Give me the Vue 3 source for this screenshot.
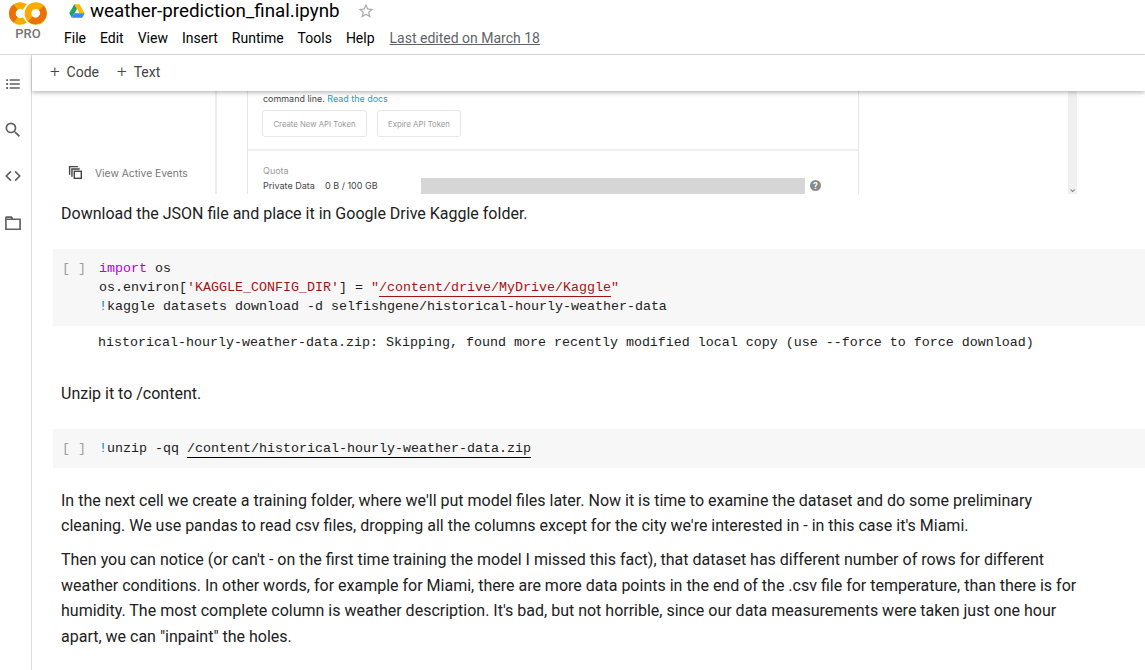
<script setup>
const menus = ['File', 'Edit', 'View', 'Insert', 'Runtime', 'Tools', 'Help']
</script>

<template>
  <div class="page">
    <header class="header">
      <div class="logo">
        <svg width="38" height="23" viewBox="0 0 40 24">
          <path d="M16.600 5.200 A8.300 8.300 0 1 0 16.600 18.800" fill="none" stroke="#f9ab00" stroke-width="7"/>
          <path d="M7 5.200 A8.300 8.300 0 0 0 7 18.800" fill="none" stroke="#e8710a" stroke-width="7"/>
          <circle cx="28.300" cy="12" r="8.300" fill="none" stroke="#f9ab00" stroke-width="7"/>
          <path d="M34.200 6.200 A8.300 8.300 0 0 1 22.400 17.800" fill="none" stroke="#e8710a" stroke-width="7"/>
        </svg>
        <span class="pro">PRO</span>
      </div>
      <div class="title-block">
        <div class="title-row">
          <svg class="drive" width="16" height="14" viewBox="0 0 16 14">
            <path d="M5.3 0.3h5.2l5.2 8.9h-5.100z" fill="#fbbc04"/>
            <path d="M5.3 0.3 0.2 9.2 2.8 13.700 8 4.900z" fill="#1fa463"/>
            <path d="M2.8 13.700h10.400l2.600-4.500H5.400z" fill="#4285f4"/>
          </svg>
          <span class="title">weather-prediction_final.ipynb</span>
          <svg class="star" width="18" height="18" viewBox="0 0 24 24">
            <path d="M22 9.24l-7.19-.62L12 2 9.19 8.63 2 9.24l5.46 4.73L5.82 21 12 17.27 18.18 21l-1.63-7.03L22 9.24zM12 15.4l-3.76 2.27 1-4.28-3.32-2.88 4.38-.38L12 6.1l1.71 4.04 4.38.38-3.32 2.88 1 4.28L12 15.4z" fill="#a9a9a9"/>
          </svg>
        </div>
        <nav class="menu">
          <span v-for="m in menus" :key="m">{{ m }}</span>
          <span class="edited">Last edited on March 18</span>
        </nav>
      </div>
    </header>

    <div class="body">
      <aside class="rail">
        <svg class="rail-icon" width="18" height="18" viewBox="0 0 24 24" fill="#616161"><path d="M3 5.500h2.400v2.400H3zM7.600 5.600H21v2.200H7.600zM3 10.800h2.400v2.400H3zM7.600 10.900H21v2.200H7.600zM3 16.100h2.400v2.400H3zM7.600 16.200H21v2.200H7.600z"/></svg>
        <svg class="rail-icon" width="20" height="20" viewBox="0 0 24 24" fill="#616161"><path d="M15.5 14h-.79l-.28-.27A6.47 6.47 0 0 0 16 9.5 6.5 6.5 0 1 0 9.5 16c1.610 0 3.090-.59 4.230-1.570l.27.28v.79l5 4.990L20.490 19l-4.990-5zm-6 0C7.010 14 5 11.990 5 9.500S7.010 5 9.500 5 14 7.010 14 9.500 11.990 14 9.500 14z"/></svg>
        <svg class="rail-icon" width="20" height="20" viewBox="0 0 24 24" fill="none" stroke="#616161" stroke-width="2"><path d="M9.500 6.500 4 12l5.500 5.500M14.500 6.500 20 12l-5.500 5.500"/></svg>
        <svg class="rail-icon" width="20" height="20" viewBox="0 0 24 24" fill="none" stroke="#616161" stroke-width="2"><path d="M3.500 4.500v15h17V7.500H3.500M3.500 5h6.500l1.500 2"/></svg>
      </aside>

      <main class="main">
        <div class="toolbar">
          <span class="tool"><i>+</i>Code</span>
          <span class="tool"><i>+</i>Text</span>
        </div>

        <div class="shot">
          <div class="shot-inner">
            <div class="shot-nav">
              <div class="events">
                <svg width="15" height="15" viewBox="0 0 16 16" fill="none" stroke="#444" stroke-width="1.500"><path d="M1.700 10.500V1.700h8.800M4.200 12.500V4.200h8.300"/><rect x="6.700" y="6.700" width="7.500" height="7.500"/></svg>
                <span>View Active Events</span>
              </div>
            </div>
            <div class="card">
              <div class="card-top">
                <p class="docs">command line. <a>Read the docs</a></p>
                <div class="buttons">
                  <span class="btn btn-a">Create New API Token</span>
                  <span class="btn btn-b">Expire API Token</span>
                </div>
              </div>
              <div class="quota">
                <div class="quota-title">Quota</div>
                <div class="quota-row">
                  <span class="q-label">Private Data</span>
                  <span class="q-value">0 B / 100 GB</span>
                  <span class="q-bar"></span>
                  <svg width="11" height="11" viewBox="0 0 11 11"><circle cx="5.500" cy="5.500" r="5.500" fill="#8a8a8a"/><text x="5.500" y="8.800" text-anchor="middle" font-size="9" font-weight="700" font-family="Roboto" fill="#fff">?</text></svg>
                </div>
              </div>
            </div>
            <div class="scroll"><span class="chev">⌄</span></div>
          </div>
        </div>

        <p class="text first">Download the JSON file and place it in Google Drive Kaggle folder.</p>

        <div class="cell cell-1">
          <span class="run">[ ]</span>
          <div class="code">
            <div class="line"><span class="kw">import</span><span> os</span></div>
            <div class="line"><span>os.environ[</span><span class="str">'KAGGLE_CONFIG_DIR'</span><span>] = </span><span class="str">"</span><span class="str link-red">/content/drive/MyDrive/Kaggle</span><span class="str">"</span></div>
            <div class="line"><span class="bang">!</span><span>kaggle datasets download -d selfishgene/historical-hourly-weather-data</span></div>
          </div>
        </div>
        <div class="output line">historical-hourly-weather-data.zip: Skipping, found more recently modified local copy (use --force to force download)</div>

        <p class="text unzip">Unzip it to /content.</p>

        <div class="cell cell-2">
          <span class="run">[ ]</span>
          <div class="code">
            <div class="line"><span class="bang">!</span><span>unzip -qq </span><span class="link-black">/content/historical-hourly-weather-data.zip</span></div>
          </div>
        </div>

        <p class="text para">In the next cell we create a training folder, where we'll put model files later. Now it is time to examine the dataset and do some preliminary cleaning. We use pandas to read csv files, dropping all the columns except for the city we're interested in - in this case it's Miami.</p>
        <p class="text para second">Then you can notice (or can't - on the first time training the model I missed this fact), that dataset has different number of rows for different weather conditions. In other words, for example for Miami, there are more data points in the end of the .csv file for temperature, than there is for humidity. The most complete column is weather description. It's bad, but not horrible, since our data measurements were taken just one hour apart, we can "inpaint" the holes.</p>
      </main>
    </div>
  </div>
</template>

<style>
html, body { margin: 0; background: #fff; overflow: hidden; }
</style>

<style scoped>
.page { width: 1145px; height: 670px; overflow: hidden; font-family: Roboto, sans-serif; color: #212121; display: flex; flex-direction: column; }
.header { height: 54px; flex: none; display: flex; border-bottom: 1px solid #dadce0; }
.logo { width: 64px; flex: none; display: flex; flex-direction: column; align-items: center; padding: 2px 8px 0 0; box-sizing: border-box; }
.pro { font-size: 13px; font-weight: 500; color: #757575; line-height: 14px; margin-top: 2px; }
.title-block { display: flex; flex-direction: column; }
.title-row { display: flex; align-items: center; height: 22px; padding-left: 5px; }
.drive { margin-right: 5px; }
.title { font-size: 18.800px; color: #000; line-height: 22px; }
.star { margin-left: 17px; }
.menu { display: flex; gap: 14px; font-size: 14px; line-height: 20px; margin-top: 6px; color: #000; }
.edited { color: #5f6368; text-decoration: underline; margin-left: 1px; }
.body { flex: 1; display: flex; min-height: 0; }
.rail { width: 25px; flex: none; border-right: 1px solid #dadce0; display: flex; flex-direction: column; align-items: center; gap: 26.600px; padding: 20px 6px 0 0; box-sizing: content-box; }
.rail-icon { display: block; }
.main { flex: 1; min-width: 0; display: flex; flex-direction: column; }
.toolbar { height: 36px; box-sizing: border-box; padding: 0 0 4px 18px; flex: none; display: flex; align-items: center; gap: 18px; box-shadow: 0 2px 4px rgba(0,0,0,.25); position: relative; z-index: 1; font-size: 14px; color: #444; }
.tool i { font-style: normal; font-size: 17px; font-weight: 300; margin-right: 7px; }
.shot { height: 103px; flex: none; overflow: hidden; padding-left: 29px; }
.shot-inner { display: flex; height: 103px; font-family: Inter, sans-serif; }
.shot-nav { width: 154px; flex: none; border-right: 2px solid #ededed; height: 103px; box-sizing: content-box; }
.events { display: flex; align-items: center; gap: 12px; font-size: 10.300px; color: #777; padding: 74px 0 0 7px; white-space: nowrap; }
.card { width: 610px; flex: none; margin-left: 30px; border-left: 1px solid #e6e6e6; border-right: 1px solid #e6e6e6; }
.card-top { height: 58px; border-bottom: 2px solid #efefef; padding-left: 15px; }
.docs { margin: 0; padding-top: 2px; font-size: 8.950px; line-height: 11px; color: #444; }
.docs a { color: #20a0c8; }
.buttons { display: flex; gap: 10px; margin: 6px 0 0 -1px; }
.btn { height: 27px; box-sizing: border-box; border: 1px solid #e6e6e6; border-radius: 3px; font-size: 7.750px; line-height: 26px; text-align: center; color: #999; }
.btn-a { width: 105px; }
.btn-b { width: 84px; }
.quota { padding: 14px 0 0 15px; }
.quota-title { font-size: 9px; line-height: 12px; color: #999; }
.quota-row { display: flex; align-items: flex-start; font-size: 9px; line-height: 18px; color: #444; height: 17px; }
.q-label { width: 62px; }
.q-value { width: 96px; }
.q-bar { width: 384px; height: 16px; margin: 1px 5px 0 0; background: #d6d6d6; }
.quota-row svg { margin-top: 3px; }
.scroll { width: 9px; flex: none; margin-left: 209px; background: #f0f0f0; position: relative; }
.chev { position: absolute; left: 0; right: 0; bottom: 1px; text-align: center; font-size: 8px; line-height: 8px; color: #555; }
.text { margin: 0; font-size: 16px; line-height: 24px; color: #212121; padding: 0 60px 0 29px; }
.first { margin-top: 8px; }
.cell { background: #f7f7f7; margin-left: 21px; display: flex; }
.cell-1 { margin-top: 23px; height: 77px; padding-top: 10px; box-sizing: border-box; }
.cell-2 { margin-top: 23px; height: 39px; padding-top: 10px; box-sizing: border-box; }
.run { width: 46px; flex: none; padding-left: 9px; box-sizing: border-box; font-family: "Liberation Mono", monospace; font-size: 13.330px; line-height: 19px; color: #9e9e9e; }
.line { margin: 0; white-space: pre; font-family: "Liberation Mono", monospace; font-size: 13.330px; line-height: 19px; color: #212121; }
.output { padding: 7px 0 0 66px; }
.kw { color: #af00db; }
.str { color: #a31515; }
.bang { color: #0086d4; }
.link-red { border-bottom: 1px solid #a31515; padding-bottom: 1px; }
.link-black { border-bottom: 1px solid #000; padding-bottom: 1px; }
.unzip { margin-top: 30px; }
.para { margin-top: 20px; line-height: 25px; }
.para.second { margin-top: 9px; line-height: 25.700px; }
</style>
